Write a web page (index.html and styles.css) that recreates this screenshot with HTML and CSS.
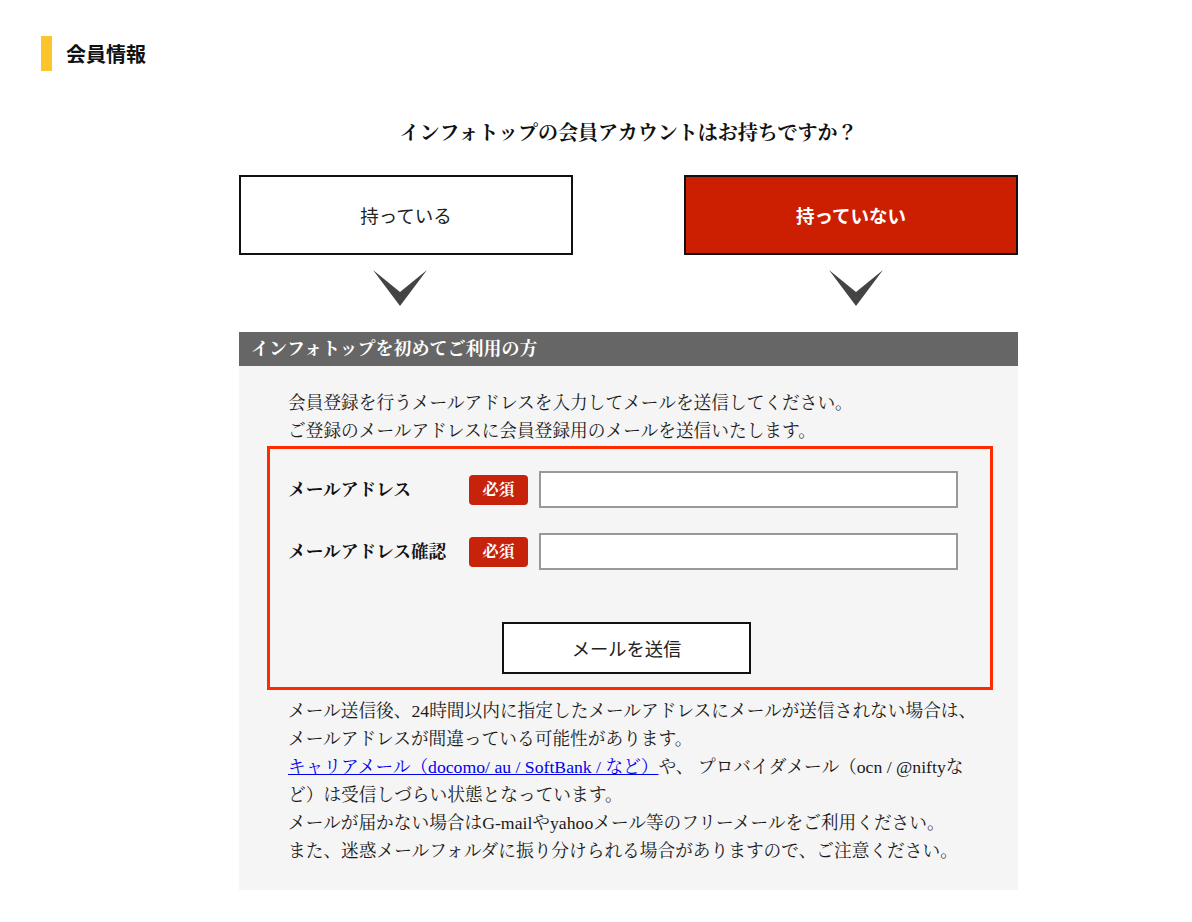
FILE: index.html
```html
<!DOCTYPE html>
<html lang="ja">
<head>
    <meta charset="UTF-8">
    <meta name="viewport" content="width=device-width, initial-scale=1.0">
    <title>会員情報</title>
    <link rel="stylesheet" href="styles.css">
</head>
<body>
    <header class="page-head">
        <span class="head-bar"></span>
        <h2>会員情報</h2>
    </header>

    <main class="content">
        <h1 class="question">インフォトップの会員アカウントはお持ちですか？</h1>

        <div class="choices">
            <div class="choice">
                <button type="button" class="choice-button">持っている</button>
                <svg class="arrow arrow-left" width="54" height="36" viewBox="0 0 54 36"><path d="M0 0 L27 22 L54 0 L27 36 Z" fill="#444"/></svg>
            </div>
            <div class="choice">
                <button type="button" class="choice-button active">持っていない</button>
                <svg class="arrow arrow-right" width="54" height="36" viewBox="0 0 54 36"><path d="M0 0 L27 22 L54 0 L27 36 Z" fill="#444"/></svg>
            </div>
        </div>

        <section class="panel">
            <h3 class="panel-title">インフォトップを初めてご利用の方</h3>
            <div class="panel-body">
                <p class="lead">会員登録を行うメールアドレスを入力してメールを送信してください。<br>ご登録のメールアドレスに会員登録用のメールを送信いたします。</p>

                <form class="signup-box" id="signupForm">
                    <div class="form-row">
                        <label for="email">メールアドレス</label>
                        <span class="required">必須</span>
                        <input type="email" id="email" name="email">
                    </div>
                    <div class="form-row">
                        <label for="emailConfirm">メールアドレス確認</label>
                        <span class="required">必須</span>
                        <input type="email" id="emailConfirm" name="emailConfirm">
                    </div>
                    <div class="submit-row">
                        <button type="submit" class="send-button">メールを送信</button>
                    </div>
                </form>

                <p class="notes">メール送信後、24時間以内に指定したメールアドレスにメールが送信されない場合は、<br>メールアドレスが間違っている可能性があります。<br><a href="#">キャリアメール（docomo/ au / SoftBank / など）</a>や、 プロバイダメール（ocn / @niftyな<br>ど）は受信しづらい状態となっています。<br>メールが届かない場合はG-mailやyahooメール等のフリーメールをご利用ください。<br>また、迷惑メールフォルダに振り分けられる場合がありますので、ご注意ください。</p>
            </div>
        </section>
    </main>
</body>
</html>
```

FILE: styles.css
```css
* {
    margin: 0;
    padding: 0;
    box-sizing: border-box;
}

body {
    background: #fff;
    color: #1a1a1a;
    font-family: "Liberation Serif", "Noto Serif CJK JP", "Noto Sans CJK JP", serif;
}

.page-head {
    display: flex;
    align-items: center;
    gap: 14px;
    padding: 36px 0 0 41px;
}

.head-bar {
    width: 11px;
    height: 35px;
    background: #fcc52c;
}

.page-head h2 {
    font-family: "Noto Sans CJK JP", sans-serif;
    font-size: 20px;
    font-weight: 700;
    color: #111;
}

.content {
    width: 779px;
    margin-left: 239px;
}

.question {
    text-align: center;
    font-size: 20px;
    font-weight: 700;
    line-height: 30px;
    margin-top: 47px;
    color: #111;
}

.choices {
    display: flex;
    justify-content: space-between;
    margin-top: 27px;
}

.choice {
    width: 334px;
    display: flex;
    flex-direction: column;
}

.choice-button {
    height: 80px;
    border: 2px solid #111;
    background: #fff;
    font-family: "Noto Sans CJK JP", sans-serif;
    font-size: 18.5px;
    color: #222;
    cursor: pointer;
}

.choice-button.active {
    background: #cc1e00;
    color: #fff;
    font-weight: 700;
}

.arrow {
    display: block;
    margin-top: 15px;
}

.arrow-left {
    margin-left: 134px;
}

.arrow-right {
    margin-left: 145px;
}

.panel {
    margin-top: 26px;
    background: #f5f5f5;
}

.panel-title {
    background: #666;
    color: #fff;
    font-size: 18px;
    font-weight: 700;
    height: 34px;
    line-height: 34px;
    padding-left: 12px;
}

.panel-body {
    padding: 23px 25px 25px 28px;
    font-size: 17.7px;
    line-height: 28px;
}

.lead,
.notes {
    padding-left: 21px;
}

.signup-box {
    margin-top: 1px;
    border: 3px solid #ff2a00;
    padding: 22px 32px 13px 18px;
}

.form-row {
    display: flex;
    align-items: center;
    margin-bottom: 25px;
}

.form-row label {
    width: 181px;
    font-weight: 700;
    color: #111;
}

.required {
    width: 59px;
    height: 30px;
    line-height: 30px;
    text-align: center;
    background: #c7230b;
    color: #fff;
    font-size: 16px;
    font-weight: 700;
    border-radius: 4px;
    margin-right: 11px;
}

.form-row input {
    width: 419px;
    height: 37px;
    border: 2px solid #999;
    background: #fff;
}

.submit-row {
    display: flex;
    justify-content: center;
    padding-top: 27px;
    padding-left: 7px;
}

.send-button {
    width: 249px;
    height: 52px;
    border: 2px solid #111;
    background: #fff;
    font-family: "Noto Sans CJK JP", sans-serif;
    font-size: 18.3px;
    color: #222;
    cursor: pointer;
}

.notes {
    margin-top: 7px;
}

.notes a {
    color: #0000ee;
}
```
